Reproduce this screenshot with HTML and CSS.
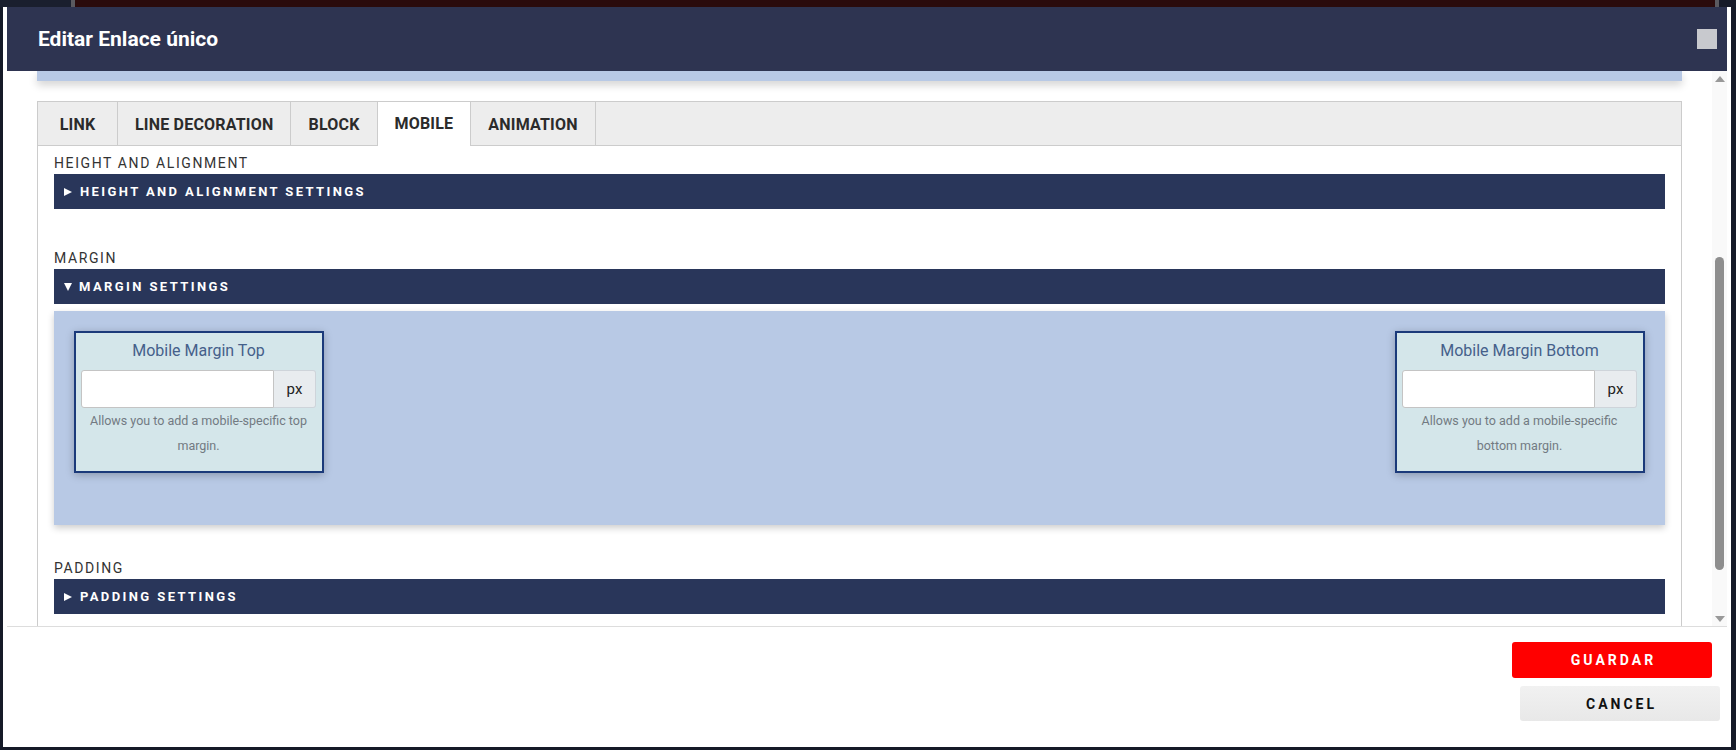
FILE: index.html
```html
<!DOCTYPE html>
<html lang="es">
<head>
<meta charset="utf-8">
<title>Editar Enlace único</title>
<link rel="stylesheet" href="styles.css">
</head>
<body>
<div class="topstrip">
  <span class="ts-navy"></span><span class="ts-line"></span><span class="ts-maroon"></span><span class="ts-line"></span><span class="ts-navy2"></span>
</div>
<div class="modal">
  <header class="modal-header">
    <h1 class="modal-title">Editar Enlace único</h1>
    <button class="close-btn" type="button" aria-label="Close"></button>
  </header>
  <div class="modal-body">
    <div class="body-content">
      <div class="prev-panel"></div>
      <div class="tabs">
        <div class="tab-bar">
          <div class="tab">LINK</div>
          <div class="tab">LINE DECORATION</div>
          <div class="tab">BLOCK</div>
          <div class="tab active">MOBILE</div>
          <div class="tab">ANIMATION</div>
        </div>
        <div class="tab-pane">
          <div class="sec-label first">HEIGHT AND ALIGNMENT</div>
          <div class="bar"><span class="tri-right"></span>HEIGHT AND ALIGNMENT SETTINGS</div>

          <div class="sec-label gap-lg">MARGIN</div>
          <div class="bar"><span class="tri-down"></span>MARGIN SETTINGS</div>
          <div class="bar-panel">
            <div class="field-card">
              <div class="field-title">Mobile Margin Top</div>
              <div class="input-group">
                <input class="field-input" type="text">
                <span class="addon">px</span>
              </div>
              <div class="field-help">Allows you to add a mobile-specific top margin.</div>
            </div>
            <div class="field-card">
              <div class="field-title">Mobile Margin Bottom</div>
              <div class="input-group">
                <input class="field-input" type="text">
                <span class="addon">px</span>
              </div>
              <div class="field-help">Allows you to add a mobile-specific bottom margin.</div>
            </div>
          </div>

          <div class="sec-label gap-md">PADDING</div>
          <div class="bar"><span class="tri-right"></span>PADDING SETTINGS</div>
        </div>
      </div>
    </div>
    <div class="scrollbar">
      <div class="sb-btn"><span class="arrow-up"></span></div>
      <div class="sb-track"><div class="sb-thumb"></div></div>
      <div class="sb-btn"><span class="arrow-down"></span></div>
    </div>
  </div>
  <footer class="modal-footer">
    <button class="btn btn-save" type="button">GUARDAR</button>
    <button class="btn btn-cancel" type="button">CANCEL</button>
  </footer>
</div>
</body>
</html>
```
FILE: styles.css
```css
* { box-sizing: border-box; }

html, body {
  margin: 0;
  padding: 0;
  height: 750px;
  overflow: hidden;
  background: #151a28;
  font-family: Roboto, "Liberation Sans", Arial, sans-serif;
}

.topstrip {
  display: flex;
  height: 7px;
}
.ts-navy { width: 71px; background: #1a1f2e; }
.ts-line { width: 4px; background: #5a5a60; }
.ts-maroon { flex: 1; background: #2a0b0c; }
.ts-navy2 { width: 17px; background: #171b29; }

.modal {
  margin-left: 3px;
  width: 1728px;
  height: 740px;
  background: #ffffff;
  padding: 0 4px;
  display: flex;
  flex-direction: column;
}

.modal-header {
  height: 64px;
  flex: 0 0 64px;
  background: #2e3451;
  display: flex;
  align-items: center;
  justify-content: space-between;
  padding: 0 10px 0 31px;
}
.modal-title {
  margin: 0;
  color: #ffffff;
  font-size: 21px;
  font-weight: 700;
  letter-spacing: 0;
}
.close-btn {
  width: 20px;
  height: 20px;
  border: 0;
  padding: 0;
  background: #c8c9ce;
}

.modal-body {
  height: 555px;
  flex: 0 0 555px;
  display: flex;
  overflow: hidden;
}
.body-content {
  flex: 1;
  padding: 0 30px;
  overflow: hidden;
}
.prev-panel {
  height: 10px;
  background: #b8c9e5;
  box-shadow: 0 4px 8px rgba(0, 0, 0, 0.18);
}

.tabs {
  margin-top: 20px;
  border: 1px solid #cccccc;
}
.tab-bar {
  display: flex;
  height: 44px;
  background: #ededed;
  border-bottom: 1px solid #cccccc;
}
.tab {
  min-width: 80px;
  padding: 0 17px;
  height: 44px;
  display: flex;
  align-items: center;
  justify-content: center;
  border-right: 1px solid #cccccc;
  font-size: 16px;
  font-weight: 700;
  color: #2b2b2b;
  letter-spacing: 0.2px;
}
.tab.active {
  background: #ffffff;
  height: 44px;
  margin-bottom: -1px;
  padding-bottom: 1px;
}

.tab-pane {
  padding: 0 16px 40px;
}
.sec-label {
  height: 20px;
  line-height: 20px;
  font-size: 14px;
  letter-spacing: 1.6px;
  color: #333333;
  margin-bottom: 1px;
}
.sec-label.first { margin-top: 7px; }
.sec-label.gap-lg { margin-top: 39px; }
.sec-label.gap-md { margin-top: 33px; }

.bar {
  height: 35px;
  background: #29365a;
  color: #ffffff;
  display: flex;
  align-items: center;
  padding-left: 10px;
  font-size: 13px;
  font-weight: 700;
  letter-spacing: 2.4px;
}
.tri-right {
  width: 0;
  height: 0;
  border-top: 4.5px solid transparent;
  border-bottom: 4.5px solid transparent;
  border-left: 8px solid #ffffff;
  margin-right: 8px;
}
.tri-down {
  width: 0;
  height: 0;
  border-left: 4.5px solid transparent;
  border-right: 4.5px solid transparent;
  border-top: 8px solid #ffffff;
  margin-right: 7px;
}

.bar-panel {
  margin-top: 7px;
  background: #b8c9e5;
  box-shadow: 0 3px 7px rgba(0, 0, 0, 0.2);
  padding: 20px 20px 52px;
  display: flex;
  justify-content: space-between;
  align-items: flex-start;
}
.field-card {
  width: 250px;
  height: 142px;
  border: 2px solid #1b3a7a;
  background: #d4e6ea;
  box-shadow: 0 2px 8px rgba(0, 0, 0, 0.25);
  padding: 7px 6px 0 5px;
}
.field-title {
  height: 22px;
  line-height: 22px;
  text-align: center;
  font-size: 16px;
  color: #45608a;
  margin-bottom: 8px;
}
.input-group {
  display: flex;
  height: 38px;
}
.field-input {
  flex: 1;
  min-width: 0;
  height: 38px;
  margin: 0;
  border: 1px solid #c4c4c4;
  border-radius: 3px 0 0 3px;
  background: #ffffff;
  font-size: 14px;
  padding: 0 8px;
}
.addon {
  width: 42px;
  height: 38px;
  display: flex;
  align-items: center;
  justify-content: center;
  background: #e8ecef;
  border: 1px solid #ced4da;
  border-left: 0;
  border-radius: 0 3px 3px 0;
  font-size: 15px;
  color: #222222;
}
.field-help {
  text-align: center;
  font-size: 12.5px;
  line-height: 25px;
  color: #727a82;
  padding: 0 4px;
}

.scrollbar {
  width: 15px;
  flex: 0 0 15px;
  background: #f9f9f9;
  display: flex;
  flex-direction: column;
}
.sb-btn {
  height: 15px;
  flex: 0 0 15px;
  display: flex;
  align-items: center;
  justify-content: center;
}
.arrow-up {
  width: 0;
  height: 0;
  border-left: 5px solid transparent;
  border-right: 5px solid transparent;
  border-bottom: 6px solid #999999;
}
.arrow-down {
  width: 0;
  height: 0;
  border-left: 5px solid transparent;
  border-right: 5px solid transparent;
  border-top: 6px solid #999999;
}
.sb-track {
  flex: 1;
  padding: 171px 3px 0;
}
.sb-thumb {
  height: 313px;
  background: #8e8e8e;
  border-radius: 5px;
}

.modal-footer {
  flex: 1;
  border-top: 1px solid #dddddd;
  display: flex;
  flex-direction: column;
  align-items: flex-end;
  padding-top: 15px;
}
.btn {
  width: 200px;
  border: 0;
  font-family: Roboto, "Liberation Sans", Arial, sans-serif;
  font-size: 14px;
  font-weight: 700;
  letter-spacing: 3px;
  padding: 0 0 0 3px;
  border-radius: 3px;
}
.btn-save {
  height: 36px;
  background: #ff0000;
  color: #ffffff;
  margin-right: 15px;
}
.btn-cancel {
  height: 35px;
  margin-top: 8px;
  margin-right: 7px;
  background: linear-gradient(#f1f1f1, #e8e8e8);
  color: #111111;
}
```
